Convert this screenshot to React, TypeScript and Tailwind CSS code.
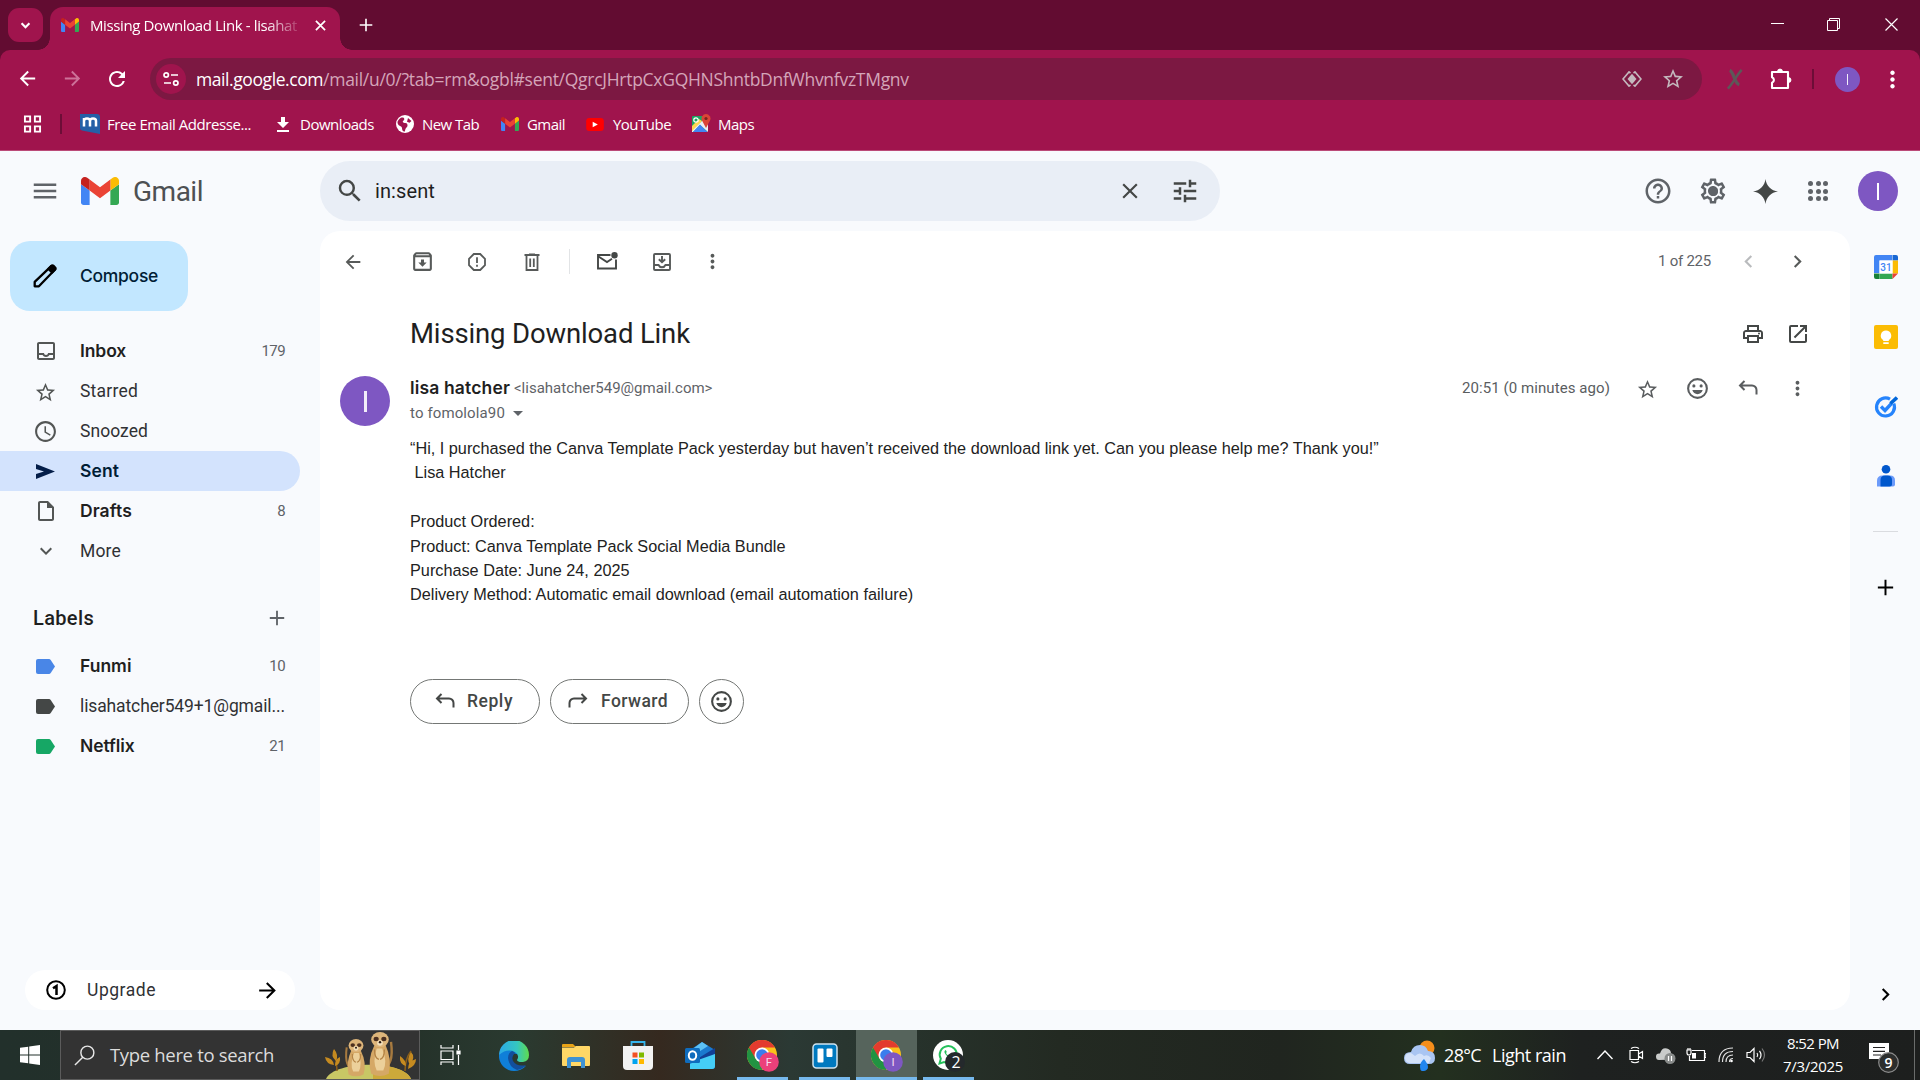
import React from 'react';
import {
  MdAccessTime,
  MdArrowBack,
  MdArrowDropDown,
  MdArrowForward,
  MdChevronLeft,
  MdChevronRight,
  MdClose,
  MdExpandMore,
  MdHelpOutline,
  MdMenu,
  MdMoreVert,
  MdOpenInNew,
  MdOutlineArchive,
  MdOutlineInsertDriveFile,
  MdOutlinePrint,
  MdOutlineSettings,
  MdRefresh,
  MdSearch,
  MdStarBorder,
  MdTune,
} from 'react-icons/md';

/* ---------- shared icons ---------- */

const GmailLogo = ({ className }: { className: string }) => (
  <svg viewBox="52 42 88 66" preserveAspectRatio="none" className={className}>
    <path fill="#4285f4" d="M58 108h14V74L52 59v43c0 3.32 2.69 6 6 6" />
    <path fill="#34a853" d="M120 108h14c3.32 0 6-2.69 6-6V59l-20 15" />
    <path fill="#fbbc04" d="M120 48v26l20-15v-8c0-7.42-8.47-11.65-14.4-7.2" />
    <path fill="#ea4335" d="M72 74V48l24 18 24-18v26L96 92" />
    <path fill="#c5221f" d="M52 51v8l20 15V48l-5.6-4.2c-5.94-4.45-14.4-.22-14.4 7.2" />
  </svg>
);

const Smiley = ({ className }: { className: string }) => (
  <svg viewBox="0 0 24 24" className={className} fill="none">
    <circle cx="12" cy="12" r="9" stroke="currentColor" strokeWidth="2" />
    <circle cx="8.5" cy="9.5" r="1.5" fill="currentColor" />
    <circle cx="15.5" cy="9.5" r="1.5" fill="currentColor" />
    <path d="M7 13.5h10c-.7 2.4-2.6 4-5 4s-4.300-1.600-5-4z" fill="currentColor" />
  </svg>
);

const ReplyArrow = ({ className }: { className: string }) => (
  <svg viewBox="0 0 24 24" className={className} fill="none" stroke="currentColor" strokeWidth="2">
    <path d="M8.500 5 4 9.500 8.500 14M4.500 9.500H16a4.500 4.500 0 0 1 4.500 4.500v4.500" />
  </svg>
);

const Plus = ({ className }: { className: string }) => (
  <svg viewBox="0 0 20 20" className={className} stroke="currentColor" strokeWidth="2.300">
    <path d="M10 1v18M1 10h18" />
  </svg>
);

/* ---------- browser chrome ---------- */

function TabStrip() {
  return (
    <div className="flex h-[50px] items-end bg-[#620c31] text-white">
      <button className="mb-2 ml-2 flex h-[34px] w-[35px] items-center justify-center rounded-[11px] bg-[#a0144d]">
        <svg viewBox="0 0 12 8" className="h-[7px] w-[11px]" fill="none" stroke="white" strokeWidth="2.400">
          <path d="M1.500 1.500 6 6l4.500-4.500" />
        </svg>
      </button>
      <div className="-ml-[5px] h-3 w-3 bg-[radial-gradient(circle_at_0_0,transparent_11.5px,#a0144d_12px)]" />
      <div className="flex h-[43px] w-[290px] items-center rounded-t-[13px] bg-[#a0144d] pb-[7px] pl-[11px]">
        <GmailLogo className="h-[14px] w-[18px]" />
        <span className="ml-[11px] w-[210px] overflow-hidden whitespace-nowrap text-[15px] tracking-[-0.38px] [mask-image:linear-gradient(to_right,black_175px,transparent_214px)]">
          Missing Download Link - lisahat
        </span>
        <svg viewBox="0 0 12 12" className="ml-[15px] h-[11px] w-[11px]" stroke="white" strokeWidth="1.900">
          <path d="m1 1 10 10M11 1 1 11" />
        </svg>
      </div>
      <div className="h-3 w-3 bg-[radial-gradient(circle_at_100%_0,transparent_11.5px,#a0144d_12px)]" />
      <Plus className="mb-[18px] ml-[7px] h-[14px] w-[14px]" />
      <div className="mb-[19px] ml-auto flex items-center">
        <svg viewBox="0 0 13 13" className="h-[13px] w-[13px]" stroke="white">
          <path d="M0 5.500h13" />
        </svg>
        <svg viewBox="0 0 13 13" className="ml-[43px] h-[13px] w-[13px]" fill="none" stroke="white">
          <path d="M.5 2.500h10v10H.5zM2.500 2.500v-2h10v10h-2" />
        </svg>
        <svg viewBox="0 0 13 13" className="ml-[45px] mr-[22px] h-[13px] w-[13px]" stroke="white" strokeWidth="1.200">
          <path d="m.500.500 12 12M12.500.5l-12 12" />
        </svg>
      </div>
    </div>
  );
}

function AddressBar() {
  return (
    <div className="flex h-[58px] items-center text-white">
      <MdArrowBack className="mb-px ml-[16px] h-[23px] w-[23px]" />
      <MdArrowForward className="mb-px ml-[22px] h-[23px] w-[23px] text-[#cd7299]" />
      <MdRefresh className="mb-px ml-[21px] h-[24px] w-[24px]" />
      <div className="ml-[21px] flex h-[42px] w-[1552px] items-center rounded-full bg-[#7c1842]">
        <div className="ml-[6px] flex h-[30px] w-[30px] items-center justify-center rounded-full bg-[#a0144d]">
          <svg viewBox="0 0 16 16" className="h-4 w-4" fill="none" stroke="white" strokeWidth="1.700">
            <circle cx="3.200" cy="4" r="2.200" />
            <path d="M8 4h7M1 12h7" />
            <circle cx="12.800" cy="12" r="2.200" />
          </svg>
        </div>
        <p className="ml-[10px] whitespace-nowrap text-[17.5px] text-[#d4a5b9]">
          <span className="tracking-[-0.42px] text-white">mail.google.com</span>
          <span className="tracking-[-0.28px]">/mail/u/0/?tab=rm&amp;ogbl#sent/QgrcJHrtpCxGQHNShntbDnfWhvnfvzTMgnv</span>
        </p>
        <svg viewBox="0 0 20 16" className="ml-auto h-4 w-5" fill="none" stroke="#c4b9be" strokeWidth="1.600">
          <path d="M8.500 2 7 .9 1 8l6 7.100L8.500 14M11.500 2 13 .9 19 8l-6 7.100-1.500-1.100" />
          <path d="m10 2.800 4.500 5.200-4.500 5.200L5.500 8z" fill="#c4b9be" stroke="none" />
        </svg>
        <MdStarBorder className="ml-[19px] mr-[17px] h-[24px] w-[24px] text-[#c4b9be]" />
      </div>
      <svg viewBox="0 0 18 22" className="ml-[24px] h-[21px] w-[18px]" fill="none" stroke="#5d5758">
        <path d="M3.500 1.500C8 3 8 15 13.500 16.500" strokeWidth="3.500" />
        <path d="M16 1C11 6 7 15 1.500 20.500" strokeWidth="2.700" />
      </svg>
      <svg viewBox="0 0 24 24" className="ml-[25px] h-[24px] w-[24px]" fill="none" stroke="white" strokeWidth="2.100" strokeLinejoin="round">
        <path d="M3 5h16v16H3v-5.200a3 3 0 0 0 0-5.600z" />
        <path d="M8.500 4.500a2.500 2.500 0 0 1 5 0zM19.500 10.500a2.500 2.500 0 0 1 0 5z" fill="white" strokeWidth=".8" />
      </svg>
      <div className="ml-[19px] h-5 w-[2px] bg-[#6d0d37]" />
      <div className="ml-[21px] flex h-[25px] w-[25px] items-center justify-center rounded-full bg-[#7e57c2]">
        <span className="h-[11px] w-[1.5px] bg-white/90" />
      </div>
      <MdMoreVert className="ml-[19px] h-[27px] w-[27px]" />
    </div>
  );
}

function Bookmarks() {
  return (
    <div className="flex h-[42px] items-start pt-[5px] text-[15px] text-white">
      <div className="flex h-[22px] items-center whitespace-nowrap">
        <svg viewBox="0 0 19 19" className="ml-[23px] h-[18px] w-[19px]" fill="none" stroke="white" strokeWidth="2">
          <path d="M1.500 1.500h5.500v5.500H1.500zM12 1.500h5.500v5.500H12zM1.500 12h5.500v5.500H1.500zM12 12h5.500v5.500H12z" />
        </svg>
        <div className="ml-[18px] h-5 w-[2px] bg-[#6d0d37]" />
        <svg viewBox="0 0 20 20" className="ml-[18px] h-5 w-5">
          <path d="M0 0h17q3 0 3 3v17L2 16.500Q0 16 0 14z" fill="#2460a7" />
          <path d="M4 12.500V4M4 7q0-2.500 3-2.500t3 2.500v5.500M10 7q0-2.500 3-2.500t3 2.500v5.500" fill="none" stroke="white" strokeWidth="2.500" />
        </svg>
        <span className="ml-[7px] w-[144px] tracking-[-0.44px]">Free Email Addresse...</span>
        <svg viewBox="0 0 12 15" className="ml-[26px] h-[15px] w-3" fill="white">
          <path d="M4 0h4v5h4l-6 6-6-6h4zM0 13h12v2H0z" />
        </svg>
        <span className="ml-[11px] w-[74px] tracking-[-0.47px]">Downloads</span>
        <svg viewBox="0 0 18 18" className="ml-[22px] h-[18px] w-[18px]">
          <circle cx="9" cy="9" r="9" fill="white" />
          <path d="M5.500 2.500C8.500 2 9 4.500 7.500 5.500S7 8 9.500 8s2.500 3.500 1 4.500-1 3-2 4.200C5 16 7 12.500 5 11.500S1.500 9.500 1.500 7.500 4 3 5.500 2.500M12 3l3.500 3-2 1.800-2.500-1z" fill="#a0144d" />
        </svg>
        <span className="ml-[8px] w-[57px] tracking-[-0.57px]">New Tab</span>
        <GmailLogo className="ml-[22px] h-[14px] w-[18px]" />
        <span className="ml-[8px] w-[38px] tracking-[-0.54px]">Gmail</span>
        <svg viewBox="0 0 19 14" className="ml-[21px] h-[13px] w-[18px]">
          <rect width="19" height="14" rx="3.500" fill="red" />
          <path d="M7 4v6l5.500-3z" fill="white" />
        </svg>
        <span className="ml-[9px] w-[58px] tracking-[-0.52px]">YouTube</span>
        <svg viewBox="0 0 20 20" className="ml-[20px] h-5 w-5">
          <path d="M1 3q0-1 1-1h14v16H1z" fill="#1da462" />
          <path d="M1 16 13 5l4 5v8L9 11l-7 7H1z" fill="#eceff1" />
          <path d="m1 12 7-7 3 2L1 17z" fill="#ffd54f" />
          <path d="m9 10.500 7.500 7.500H2z" fill="#4285f4" />
          <circle cx="5" cy="6" r="2.200" fill="none" stroke="white" strokeWidth="1.200" />
          <path d="M15 0a4.500 4.500 0 0 1 4 6.500L15 14l-4-7.500A4.500 4.500 0 0 1 15 0" fill="#db4437" />
          <circle cx="15" cy="4.500" r="1.600" fill="#7b231e" />
        </svg>
        <span className="ml-[7px] tracking-[-0.54px]">Maps</span>
      </div>
    </div>
  );
}

/* ---------- mail header ---------- */

function MailHeader() {
  return (
    <header className="flex h-[80px] items-center text-[#5f6368]">
      <MdMenu className="ml-[30px] h-[30px] w-[30px]" />
      <GmailLogo className="ml-[21px] h-[28px] w-[38px]" />
      <span className="ml-[13px] w-[175px] pl-px pt-px font-[Roboto] text-[28px] leading-none tracking-[-0.5px] text-[#4d5053]">Gmail</span>
      <div className="ml-[13px] flex h-[60px] w-[900px] items-center rounded-full bg-[#e9eef6] text-[#444746]">
        <MdSearch className="ml-[15px] h-[30px] w-[30px]" />
        <span className="ml-[10px] font-[Roboto] text-[20px] tracking-[0.1px] text-[#1f1f1f]">in:sent</span>
        <MdClose className="ml-auto h-[26px] w-[26px]" />
        <MdTune className="ml-[27px] mr-[20px] h-[30px] w-[30px]" />
      </div>
      <MdHelpOutline className="ml-auto h-[30px] w-[30px]" />
      <div className="relative ml-[25px] h-[30px] w-[30px]">
        <MdOutlineSettings className="h-[30px] w-[30px]" />
        <span className="absolute left-[10.500px] top-[10.500px] h-[9px] w-[9px] rounded-full bg-[#5f6368]" />
      </div>
      <svg viewBox="0 0 24 24" className="ml-[25px] h-[25px] w-[25px]" fill="#444746">
        <path d="M12 0c.8 6.500 5.500 11.200 12 12-6.500.8-11.200 5.500-12 12C11.200 17.500 6.500 12.800 0 12 6.500 11.200 11.200 6.500 12 0" />
      </svg>
      <div className="ml-[30px] grid grid-cols-3 gap-[2.500px]">
        {Array.from({ length: 9 }, (_, i) => (
          <span key={i} className="h-[5px] w-[5px] rounded-full bg-[#5f6368]" />
        ))}
      </div>
      <div className="ml-[30px] mr-[22px] flex h-10 w-10 items-center justify-center rounded-full bg-[#7e57c2]">
        <span className="h-[17px] w-[2px] bg-white" />
      </div>
    </header>
  );
}

/* ---------- sidebar ---------- */

const InboxIcon = () => (
  <svg viewBox="0 0 24 24" className="h-[24px] w-[24px]" fill="currentColor">
    <path d="M19 3H5c-1.100 0-2 .9-2 2v14c0 1.100.9 2 2 2h14c1.100 0 2-.9 2-2V5c0-1.100-.9-2-2-2m0 16H5v-3h3.560c.69 1.190 1.970 2 3.450 2s2.750-.81 3.450-2H19zm0-5h-4.990c0 1.100-.9 2-2 2s-2-.9-2-2H5V5h14z" />
  </svg>
);
const SentIcon = () => (
  <svg viewBox="0 0 19 15" className="h-[15px] w-[19px]" fill="#041e49">
    <path d="M0 0 19 7.500 0 15v-5l8-2.500L0 5z" />
  </svg>
);
const Tag = ({ className }: { className: string }) => (
  <svg viewBox="0 0 19 15" className={className} fill="currentColor">
    <path d="M2 0h11q1 0 1.700 1L19 7.500 14.700 14q-.7 1-1.700 1H2q-2 0-2-2V2Q0 0 2 0" />
  </svg>
);

type Row = { icon: React.ReactNode; name: string; track: string; count?: string; bold?: boolean; active?: boolean };

const folders: Row[] = [
  { icon: <InboxIcon />, name: 'Inbox', track: 'tracking-[-0.1px]', count: '179', bold: true },
  { icon: <MdStarBorder className="mt-[2px] h-[23px] w-[23px]" />, name: 'Starred', track: 'tracking-[0.22px]' },
  { icon: <MdAccessTime className="h-[25px] w-[25px]" />, name: 'Snoozed', track: 'tracking-[0.06px]' },
  { icon: <SentIcon />, name: 'Sent', track: 'tracking-[0.1px]', bold: true, active: true },
  { icon: <MdOutlineInsertDriveFile className="h-[24px] w-[24px]" />, name: 'Drafts', track: 'tracking-[0.1px]', count: '8', bold: true },
  { icon: <MdExpandMore className="h-[24px] w-[24px]" />, name: 'More', track: 'tracking-[0.17px]' },
];

const labels: Row[] = [
  { icon: <Tag className="h-[15px] w-[19px] text-[#4986e7]" />, name: 'Funmi', track: 'tracking-[0px]', count: '10', bold: true },
  { icon: <Tag className="h-[15px] w-[19px] text-[#444746]" />, name: 'lisahatcher549+1@gmail...', track: 'tracking-[-0.12px]' },
  { icon: <Tag className="h-[15px] w-[19px] text-[#16a765]" />, name: 'Netflix', track: 'tracking-[-0.08px]', count: '21', bold: true },
];

function SideRow({ row }: { row: Row }) {
  return (
    <div
      className={`flex h-10 w-[300px] items-center rounded-r-full pr-[15px] ${
        row.active ? 'bg-[#d3e3fd] text-[#001d35]' : 'text-[#1f1f1f]'
      }`}
    >
      <span className="ml-[31px] flex w-[29px] justify-center text-[#535655]">{row.icon}</span>
      <span
        className={`ml-[20px] whitespace-nowrap text-[17.5px] ${row.track} ${
          row.bold ? 'font-[Inter] font-semibold' : 'font-[Roboto] text-[#303134]'
        }`}
      >
        {row.name}
      </span>
      {row.count && <span className="ml-auto font-[Roboto] text-[15px] tracking-[-0.6px] text-[#5f6368]">{row.count}</span>}
    </div>
  );
}

function Sidebar() {
  return (
    <aside className="flex w-[320px] flex-col">
      <button className="ml-[10px] mt-[10px] flex h-[70px] w-[178px] items-center rounded-[20px] bg-[#c2e7ff] text-[#001d35]">
        <svg viewBox="0 0 24 24" className="ml-[23px] h-6 w-6" fill="none" stroke="black" strokeWidth="2.300" strokeLinejoin="round">
          <path d="M1.700 22.300v-4.500L18.500 1.900l3.600 3.600L5.900 22.300z" />
          <path d="m15.500 4.900 3-3q1-1 2 0l1.600 1.600q1 1 0 2l-3 3z" fill="black" />
        </svg>
        <span className="ml-[23px] font-[Inter] text-[17.5px] font-medium tracking-[-0.29px]">Compose</span>
      </button>
      <nav className="mt-[20px]">
        {folders.map((r) => (
          <SideRow key={r.name} row={r} />
        ))}
      </nav>
      <div className="mt-[27px] flex h-10 items-center text-[#1f1f1f]">
        <span className="ml-[33px] font-[Roboto] text-[20px] font-medium tracking-[0.35px]">Labels</span>
        <Plus className="ml-auto mr-[35px] h-[16px] w-[16px] text-[#5f6368]" />
      </div>
      <div className="mt-[8px]">
        {labels.map((r) => (
          <SideRow key={r.name} row={r} />
        ))}
      </div>
      <div className="mb-[20px] ml-[25px] mt-auto flex h-10 w-[270px] items-center rounded-full bg-white">
        <svg viewBox="0 0 20 20" className="ml-[21px] h-5 w-5" fill="none" stroke="black" strokeWidth="2">
          <circle cx="10" cy="10" r="8.800" />
          <path d="m7 8.300 3.500-2.200V15" strokeWidth="2.500" />
        </svg>
        <span className="ml-[21px] font-[Roboto] text-[17.5px] tracking-[0.53px] text-[#303134]">Upgrade</span>
        <MdArrowForward className="ml-auto mr-[15px] h-[25px] w-[25px] text-black" />
      </div>
    </aside>
  );
}

/* ---------- conversation ---------- */

const Box = ({ children, className = '' }: { children: React.ReactNode; className?: string }) => (
  <span className={`flex h-10 w-10 shrink-0 items-center justify-center ${className}`}>{children}</span>
);

function Toolbar() {
  return (
    <div className="flex h-[61px] items-center text-[#575a59]">
      <Box className="ml-[13px]">
        <MdArrowBack className="h-[22px] w-[22px]" />
      </Box>
      <Box className="ml-[29px]">
        <MdOutlineArchive className="h-[25px] w-[25px]" />
      </Box>
      <Box className="ml-[15px]">
        <svg viewBox="0 0 18 18" className="h-[18px] w-[18px]" fill="none" stroke="currentColor" strokeWidth="1.800">
          <path d="M5.800 1h6.400L17 5.800v6.400L12.200 17H5.800L1 12.200V5.800zM9 4.300v5.700M9 11.700v2" />
        </svg>
      </Box>
      <Box className="ml-[15px]">
        <svg viewBox="0 0 16 18" className="h-[18px] w-[16px]" fill="none" stroke="currentColor" strokeWidth="1.800">
          <path d="M.5 2h15M5 1.300h6M2.500 2.500V17h11V2.500M6.200 5.500v8.500M9.800 5.500v8.500" />
        </svg>
      </Box>
      <span className="ml-[17px] h-[25px] w-px bg-[#e2e4e6]" />
      <Box className="ml-[17px]">
        <svg viewBox="0 0 22 18" className="mb-[2px] h-[18px] w-[22px] text-[#444746]" fill="none" stroke="currentColor" strokeWidth="1.900">
          <path d="M14.500 3H2v13.500h18V7.500M2.500 4.500 11 10l5-3.200" />
          <circle cx="18.500" cy="3.200" r="3.200" fill="currentColor" stroke="none" />
        </svg>
      </Box>
      <Box className="ml-[15px]">
        <svg viewBox="0 0 18 18" className="h-[18px] w-[18px]" fill="none" stroke="currentColor" strokeWidth="1.900">
          <rect x="1" y="1" width="16" height="16" rx="1" />
          <path d="M1 12h4.500q1 2.200 3.500 2.200t3.500-2.200H17M9 3v6M5.800 6.300 9 9.300l3.200-3" />
        </svg>
      </Box>
      <Box className="ml-[10px]">
        <MdMoreVert className="h-[23px] w-[23px]" />
      </Box>
      <span className="ml-auto font-[Roboto] text-[15px] tracking-[-0.24px] text-[#5f6368]">1 of 225</span>
      <Box className="ml-[17px] text-[#b9bbbd]">
        <MdChevronLeft className="h-[25px] w-[25px]" />
      </Box>
      <Box className="ml-[9px] mr-[33px]">
        <MdChevronRight className="h-[25px] w-[25px]" />
      </Box>
    </div>
  );
}

function Conversation() {
  return (
    <main className="flex h-[779px] w-[1530px] flex-col rounded-[20px] bg-white">
      <Toolbar />
      <div className="mt-[22px] flex h-10 items-center text-[#444746]">
        <h1 className="ml-[90px] font-[Roboto] text-[27.5px] tracking-[-0.15px] text-[#1f1f1f]">Missing Download Link</h1>
        <Box className="ml-auto">
          <MdOutlinePrint className="h-[24px] w-[24px]" />
        </Box>
        <Box className="ml-[5px] mr-[32px]">
          <MdOpenInNew className="h-[24px] w-[24px]" />
        </Box>
      </div>
      <div className="mt-[22px] flex h-[60px] items-start text-[#5f6368]">
        <div className="ml-[20px] flex h-[50px] w-[50px] items-center justify-center rounded-full bg-[#7e57c2]">
          <span className="h-[21px] w-[3px] bg-white/90" />
        </div>
        <div className="ml-[20px]">
          <div className="flex h-6 items-center whitespace-nowrap">
            <span className="w-[104px] font-[Inter] text-[17.5px] font-semibold tracking-[0.15px] text-[#1f1f1f]">lisa hatcher</span>
            <span className="font-[Roboto] text-[15px]">&lt;lisahatcher549@gmail.com&gt;</span>
          </div>
          <div className="flex h-[26px] items-center font-[Roboto] text-[15px] tracking-[0.12px]">
            to fomolola90
            <MdArrowDropDown className="ml-px h-[24px] w-[24px]" />
          </div>
        </div>
        <div className="-mt-2 ml-auto mr-[33px] flex items-center text-[#5a5d5f]">
          <span className="whitespace-nowrap font-[Roboto] text-[15px] tracking-[0.08px]">20:51 (0 minutes ago)</span>
          <Box className="ml-[17px]">
            <MdStarBorder className="mt-[2px] h-[23px] w-[23px]" />
          </Box>
          <Box className="ml-[10px]">
            <Smiley className="h-[25px] w-[25px]" />
          </Box>
          <Box className="ml-[11px]">
            <ReplyArrow className="h-[24px] w-[24px]" />
          </Box>
          <Box className="ml-[9px]">
            <MdMoreVert className="h-[23px] w-[23px]" />
          </Box>
        </div>
      </div>
      <div className="ml-[90px] whitespace-pre font-['Liberation_Sans'] text-[16.25px] leading-[24.375px] text-[#222]">
        <p>“Hi, I purchased the Canva Template Pack yesterday but haven’t received the download link yet. Can you please help me? Thank you!”</p>
        <p> Lisa Hatcher</p>
        <p className="mt-[24.375px]">Product Ordered:</p>
        <p>Product: Canva Template Pack Social Media Bundle</p>
        <p>Purchase Date: June 24, 2025</p>
        <p>Delivery Method: Automatic email download (email automation failure)</p>
      </div>
      <div className="ml-[90px] mt-[72px] flex font-[Roboto] text-[17.5px] font-medium text-[#444746]">
        <button className="flex h-[45px] w-[130px] items-center rounded-full border border-[#747775]">
          <ReplyArrow className="ml-[22px] h-[24px] w-[24px]" />
          <span className="ml-[10px] tracking-[0.55px]">Reply</span>
        </button>
        <button className="ml-[10px] flex h-[45px] w-[139px] items-center rounded-full border border-[#747775]">
          <ReplyArrow className="ml-[15px] h-[24px] w-[24px] -scale-x-100" />
          <span className="ml-[11px] tracking-[0.42px]">Forward</span>
        </button>
        <button className="ml-[10px] flex h-[45px] w-[45px] items-center justify-center rounded-full border border-[#747775]">
          <Smiley className="h-[25px] w-[25px]" />
        </button>
      </div>
    </main>
  );
}

function AppRail() {
  return (
    <aside className="flex w-[70px] flex-col items-center text-black">
      <svg viewBox="0 0 24 24" className="ml-px mt-[24px] h-6 w-6">
        <path d="M0 2q0-2 2-2h16v5.500H5.500V18H0z" fill="#4285f4" />
        <path d="M18.500 0H22q2 0 2 2v3.500h-5.500z" fill="#1967d2" />
        <path d="M18.500 5.500H24v13h-5.500z" fill="#fbbc04" />
        <path d="M0 18.500h5.500V24H2q-2 0-2-2z" fill="#188038" />
        <path d="M5.500 18.500h13V24h-13z" fill="#34a853" />
        <path d="M18.500 18.500H24L18.500 24z" fill="#ea4335" />
        <path d="M5.500 5.500h13v13h-13z" fill="white" />
        <text x="12" y="15.800" textAnchor="middle" fontSize="10" fontFamily="Roboto" fontWeight="500" fill="#4285f4">31</text>
      </svg>
      <svg viewBox="0 0 24 24" className="ml-px mt-[46px] h-6 w-6">
        <rect width="24" height="24" rx="2" fill="#fbbc04" />
        <path d="M12 5.500a5.200 5.200 0 0 1 2.800 9.600v.9H9.200v-.9A5.200 5.200 0 0 1 12 5.500M9.300 17.200h5.400V19H9.300z" fill="white" />
      </svg>
      <svg viewBox="0 0 24 24" className="ml-px mt-[46px] h-6 w-6" fill="none">
        <path d="M19.800 8.500a9 9 0 1 1-3.800-4.300" stroke="#2684fc" strokeWidth="3.200" />
        <path d="m7 11.500 4 4 6.500-7" stroke="#2684fc" strokeWidth="3.400" />
        <path d="m16.500 8.500 6.500-6" stroke="#0066da" strokeWidth="3.600" />
      </svg>
      <svg viewBox="0 0 18 22" className="ml-px mt-[46px] h-[22px] w-[18px]">
        <circle cx="9" cy="4.300" r="4.300" fill="#0057cc" />
        <path d="M0 16q0-5.500 5.500-5.500H13q5 0 5 5v4q0 2-2 2H0z" fill="#6c9bfa" />
        <path d="M3.500 21.500V15q0-4.500 4.500-4.500h2.500q4.500 0 4.500 4.500v4q0 2.500-2.500 2.500z" fill="#0057cc" />
      </svg>
      <span className="mt-[44px] h-px w-[25px] bg-[#dadce0]" />
      <Plus className="mt-[47px] h-[17px] w-[17px]" />
      <MdChevronRight className="mb-[23px] mt-auto h-[25px] w-[25px]" />
    </aside>
  );
}

/* ---------- taskbar ---------- */

const ChromeIcon = ({ letter, color }: { letter: string; color: string }) => (
  <svg viewBox="0 0 32 32" className="h-8 w-8">
    <circle cx="15" cy="15" r="15" fill="#fbc11a" />
    <path d="M15 15 2 7.500A15 15 0 0 0 15 30l6-8z" fill="#229342" />
    <path d="M2 7.500A15 15 0 0 1 28 7.500H15L8.500 18.700z" fill="#e33b2e" />
    <circle cx="15" cy="15" r="7.500" fill="white" />
    <circle cx="15" cy="15" r="5.800" fill="#3b7ded" />
    <circle cx="22" cy="22" r="9.800" fill={color} />
    <text x="22" y="26.200" textAnchor="middle" fontSize="11.500" fontFamily="Roboto" fill="#f6dcee">{letter}</text>
  </svg>
);

const Meerkat = ({ x, y, s }: { x: number; y: number; s: number }) => (
  <g transform={`translate(${x} ${y}) scale(${s})`}>
    <path d="M-2 32Q-13 30-10 8" stroke="#a77a3f" strokeWidth="2.200" fill="none" />
    <path d="M-5 11Q-11 24-8 37q8 4 16 0 4-12-3-26z" fill="#d5a866" />
    <path d="M-2 14q-5 12-1 20h6q4-8 0-20z" fill="#ecd09a" />
    <path d="M-4 15q0 8 4 9M5 15q0 8-4 9" stroke="#b48446" strokeWidth="1.200" fill="none" />
    <ellipse cx="0" cy="6" rx="8" ry="7" fill="#ddb57a" />
    <ellipse cx="-3.500" cy="5.500" rx="2.400" ry="2" fill="#4c3020" />
    <ellipse cx="3.500" cy="5.500" rx="2.400" ry="2" fill="#4c3020" />
    <ellipse cx="0" cy="9" rx="2.600" ry="2.500" fill="#f2dfba" />
    <circle cx="0" cy="8.300" r="1.100" fill="#2b1b14" />
  </g>
);

function SearchBox() {
  return (
    <div className="flex h-[50px] w-[360px] items-center border border-[#5b5b5b] bg-[#333] text-[#dcdcdc]">
      <svg viewBox="0 0 22 22" className="ml-[13px] h-[21px] w-[21px]" fill="none" stroke="#e8e8e8" strokeWidth="1.500">
        <circle cx="14" cy="8" r="6.800" />
        <path d="m9.200 12.800-8.200 8.200" />
      </svg>
      <span className="ml-[15px] whitespace-nowrap text-[18.5px] tracking-[-0.33px]">Type here to search</span>
      <svg viewBox="0 0 94 48" className="ml-auto mr-[2px] h-[48px] w-[94px]">
        <path d="M3 48C10 30 80 28 88 48z" fill="#c8c765" />
        <path d="M50 34c18 0 34 5 38 14H50z" fill="#cda93a" />
        <path d="M14 40Q14 30 11 19M82 40q0-12 6-20" stroke="#8b5d18" strokeWidth="1.500" fill="none" />
        <path d="M11 18q5 6 2 12-6-5-2-12M2 26q8 1 9 8-8-1-9-8M17 26q1 7-5 9 0-7 5-9M88 21q5 5-1 13-4-6 1-13M77 25q6 4 6 10-7-2-6-10M93 28q0 7-8 10 0-8 8-10" fill="#c58a20" />
        <Meerkat x={33} y={9} s={0.93} />
        <g transform="translate(57 1) scale(-1 1)">
          <Meerkat x={0} y={1} s={1.1} />
        </g>
      </svg>
    </div>
  );
}

const Task = ({ children, className = 'w-[62px]', open = false }: { children: React.ReactNode; className?: string; open?: boolean }) => (
  <div className={`flex h-[50px] shrink-0 flex-col items-center ${className}`}>
    <span className="flex h-[47px] items-center pt-1">{children}</span>
    {open && <span className="h-[3px] w-full bg-[#76b9ed]" />}
  </div>
);

function Taskbar() {
  return (
    <footer className="flex h-[50px] items-center bg-[linear-gradient(90deg,#22302b_0,#243129_400px,#2a3a30_520px,#35291f_660px,#2b3934_790px,#27332c_900px,#232a22_1060px,#20251f_1280px,#23301f_1440px,#1e2120_1580px,#1d1f1e_1920px)] text-white">
      <div className="flex w-[60px] justify-center">
        <svg viewBox="0 0 20 20" className="h-5 w-5" fill="white">
          <path d="M0 2.800 8.200 1.700v7.800H0zM9.200 1.500 20 0v9.500H9.200zM0 10.500h8.200v7.800L0 17.200zM9.200 10.500H20V20L9.200 18.500z" />
        </svg>
      </div>
      <SearchBox />
      <svg viewBox="0 0 21 20" className="ml-[20px] h-5 w-[21px]" fill="none" stroke="white" strokeWidth="1.200">
        <path d="M1 0v3h12V0M1 6h12v8.500H1zM1 20v-3h12v3M18.500 0v5M18.500 10v10" />
        <path d="M17 6h3v3h-3z" fill="white" />
      </svg>
      <Task className="ml-[22px] w-[62px]">
        <svg viewBox="0 0 30 30" className="h-[30px] w-[30px]">
          <defs>
            <linearGradient id="edgeTop" x1="0" x2="1">
              <stop offset="0" stopColor="#2ba9e8" />
              <stop offset=".6" stopColor="#35c6c0" />
              <stop offset="1" stopColor="#5fdb4d" />
            </linearGradient>
          </defs>
          <path d="M0 14Q3 6 13 8q7 2 7 6-5-3-8 0-3 4 0 8 5 7 15 3-5 5-12 5A15 15 0 0 1 0 14" fill="#0f7fd9" />
          <path d="M13 10q-4 2-4 7 1 9 9 12 6-1 9-5-9 2-13-4-2-4 2-8-1-2-3-2" fill="#124f9c" />
          <path d="M0 14A15 15 0 0 1 30 14q0 6-6 7-5 .5-6-2 3-5-2-8Q8 7 0 14" fill="url(#edgeTop)" />
        </svg>
      </Task>
      <Task>
        <svg viewBox="0 0 28 24" className="h-[24px] w-[28px]">
          <path d="M0 1q0-1 1-1h10l3 3H0z" fill="#e8a317" />
          <path d="M0 3.500h12l2-1.500h13q1 0 1 1v18q0 1-1 1H1q-1 0-1-1z" fill="#ffd766" />
          <path d="M5 24v-8q0-3 3-3h12q3 0 3 3v8h-4v-6H9v6z" fill="#3f92d2" />
        </svg>
      </Task>
      <Task>
        <svg viewBox="0 0 30 29" className="h-[29px] w-[30px]">
          <path d="M8.500 5V1h13v4" fill="none" stroke="#35b4ea" strokeWidth="1.800" />
          <path d="M0 5h30v20q0 4-4 4H4q-4 0-4-4z" fill="#f2f2f2" />
          <path d="M9.500 11.500h5v5h-5z" fill="#f25022" />
          <path d="M16 11.500h5v5h-5z" fill="#7fba00" />
          <path d="M9.500 18h5v5h-5z" fill="#00a4ef" />
          <path d="M16 18h5v5h-5z" fill="#ffb900" />
        </svg>
      </Task>
      <Task>
        <svg viewBox="0 0 30 27" className="h-[27px] w-[30px]">
          <path d="M5 8 17 0l13 8v16q0 3-3 3H5z" fill="#1a79cf" />
          <path d="M9 6 17 0l6 4-14 9z" fill="#5cc1f5" />
          <path d="m12 17 18-11v6L15 21z" fill="#123f95" />
          <path d="m5 22 8-4 17-6v12q0 3-3 3H5z" fill="#45cdf6" />
          <rect y="6" width="15" height="15" rx="1.500" fill="#0f6cbd" />
          <ellipse cx="7.500" cy="13.500" rx="3.700" ry="4.200" fill="none" stroke="white" strokeWidth="2" />
        </svg>
      </Task>
      <Task open className="ml-[6px] w-[51px]">
        <ChromeIcon letter="F" color="#ec407a" />
      </Task>
      <Task open className="ml-[11px] w-[51px]">
        <svg viewBox="0 0 26 26" className="h-[26px] w-[26px]">
          <rect x="1" y="1" width="24" height="24" rx="3.500" fill="#0079bf" stroke="#cfe3ef" strokeWidth="1.500" />
          <rect x="5.500" y="5.500" width="6" height="14" rx="1" fill="white" />
          <rect x="14.500" y="5.500" width="6" height="8.500" rx="1" fill="white" />
        </svg>
      </Task>
      <Task open className="ml-[6px] w-[61px] bg-[#56645c]">
        <ChromeIcon letter="I" color="#7e57c2" />
      </Task>
      <Task open className="ml-[6px] w-[51px]">
        <svg viewBox="0 0 32 32" className="h-8 w-8">
          <circle cx="15" cy="15" r="15" fill="white" />
          <path d="m6.500 23.500 1.300-4.800a8.500 8.500 0 1 1 3.300 3.300z" fill="none" stroke="#25c15b" strokeWidth="2" />
          <path d="M12 10.500q-1.500 1.500 1 4.500t5 3l1-2-2.500-1.500-1 1q-2-1-2.500-2.500l.8-1-1-2z" fill="#25c15b" />
          <circle cx="22" cy="22" r="10" fill="#24292c" />
          <text x="23" y="28" textAnchor="middle" fontSize="16" fontFamily="Open Sans" fill="white">2</text>
        </svg>
      </Task>

      <svg viewBox="0 0 31 31" className="ml-auto h-[31px] w-[31px]">
        <circle cx="23" cy="8" r="7.500" fill="#f58e1b" />
        <path d="M6 24q-6 0-6-6t7-6q2-7 9-7 6 0 8 6 7 0 7 7 0 6-6 6z" fill="#a9c5f2" />
        <path d="M5 23q-4-1-4-5 0-5 6-5l4 3q5-5 9 0 4-2 7 2l-2 5z" fill="#d3e2fa" />
        <path d="M20 19q4 5 4 8t-4 4-4-4 4-8" fill="#2186f0" />
      </svg>
      <span className="ml-[9px] w-[48px] text-[18px] tracking-[-0.66px]">28°C</span>
      <span className="w-[74px] whitespace-nowrap text-[18px] tracking-[-0.48px]">Light rain</span>
      <svg viewBox="0 0 16 10" className="ml-[31px] h-[10px] w-4" fill="none" stroke="white" strokeWidth="1.400">
        <path d="m.500 9 7.500-8 7.500 8" />
      </svg>
      <svg viewBox="0 0 15 18" className="ml-[16px] h-[18px] w-[15px]" fill="none" stroke="white" strokeWidth="1.200">
        <path d="M1 4.500h8.500v9H1zM9.500 8l4-2.500v7l-4-2.500M2 2.500q4-2.500 8 0M2 15.500q4 2.500 8 0" />
      </svg>
      <svg viewBox="0 0 20 17" className="ml-[12px] h-[17px] w-5">
        <path d="M3 13q-3 0-3-3.500t4-3Q6 0 11 1.500q4 1 4 5 4 1 4 6z" fill="#c9cbca" />
        <circle cx="14" cy="11.500" r="5.500" fill="#888b8a" />
        <path d="M12.500 9v5M15.500 9v5" stroke="white" strokeWidth="1.200" />
      </svg>
      <svg viewBox="0 0 20 14" className="ml-[10px] h-[14px] w-5" fill="none" stroke="white" strokeWidth="1.200">
        <path d="M6 2.500h12.500v10H3.500V8M18.500 5.500H20v4h-1.500M1 2v3q0 2 2 2t2-2V2zM2 2V0M4 2V0" />
        <path d="M6 5h4v5.500H6z" fill="white" stroke="none" />
      </svg>
      <svg viewBox="0 0 16 16" className="ml-[12px] h-4 w-4" fill="none" stroke="#e4e4e4" strokeWidth="1.200">
        <path d="M1 15Q1 1 15 1M4.500 15Q4.500 4.500 15 4.500M8 15q0-7 7-7M11.500 15q0-3.500 3.500-3.500" />
        <circle cx="13.500" cy="14" r="1.300" fill="white" stroke="none" />
      </svg>
      <svg viewBox="0 0 20 16" className="ml-[12px] h-4 w-5" fill="none" stroke="white" strokeWidth="1.200">
        <path d="M1 5.500h3l4-4v13l-4-4H1zM11 6q1.500 2 0 4M13.500 3.800q3 4.200 0 8.400" />
        <path d="M16 1.500q5 6.500 0 13" stroke="#777" />
      </svg>
      <div className="ml-[11px] flex w-[72px] flex-col items-center whitespace-nowrap text-[15px] leading-[23px]">
        <span className="tracking-[-0.58px]">8:52 PM</span>
        <span className="tracking-[-0.31px]">7/3/2025</span>
      </div>
      <svg viewBox="0 0 30 32" className="ml-[20px] mt-[6px] h-8 w-[30px]">
        <path d="M0 1h20v16h-6l-3 3v-3H0z" fill="white" />
        <path d="M4 5.500h12M4 9.300h12M4 13h8" stroke="#222" strokeWidth="1.200" />
        <circle cx="19.500" cy="20.500" r="9.800" fill="#2c2e2d" stroke="#8b8b8b" strokeWidth="1.200" />
        <text x="19.500" y="25.500" textAnchor="middle" fontSize="14" fontFamily="Open Sans" fontWeight="600" fill="white">9</text>
      </svg>
      <span className="ml-[15px] mr-[5px] h-[50px] w-px bg-[#6a6c6b]" />
    </footer>
  );
}

export default function App() {
  return (
    <div className="h-[1080px] w-[1920px] overflow-hidden bg-[#f8fafd] font-['Open_Sans',sans-serif]">
      <TabStrip />
      <div className="bg-[#620c31]">
        <div className="h-[101px] rounded-t-[10px] border-b border-[#bb4b78] bg-[#a0144d]">
          <AddressBar />
          <Bookmarks />
        </div>
      </div>
      <MailHeader />
      <div className="flex h-[799px]">
        <Sidebar />
        <Conversation />
        <AppRail />
      </div>
      <Taskbar />
    </div>
  );
}
